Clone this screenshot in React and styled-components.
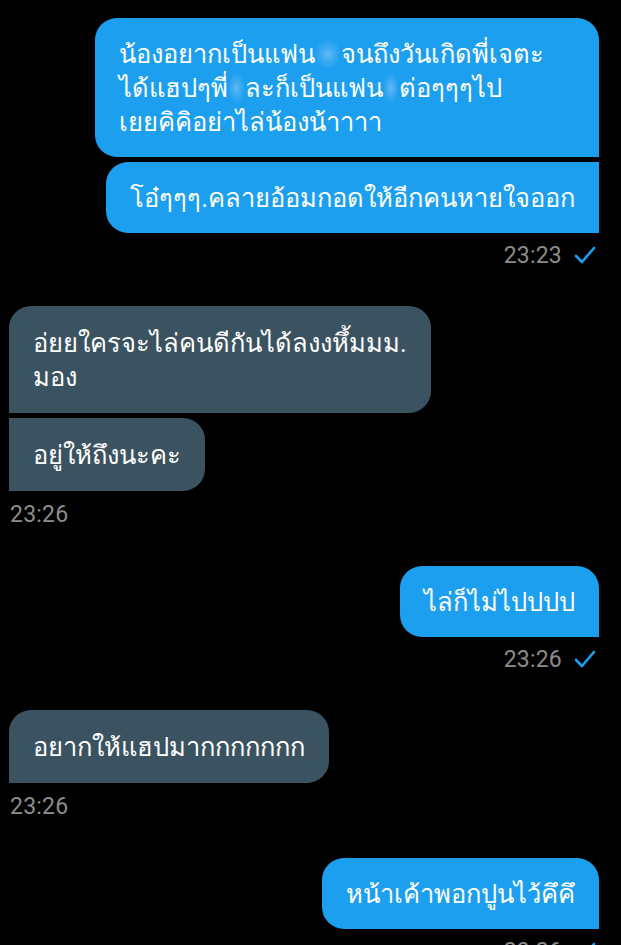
import React from 'react'
import styled, { createGlobalStyle } from 'styled-components'

const GlobalStyle = createGlobalStyle`
  html, body {
    margin: 0;
    padding: 0;
    background: #000;
  }
  body {
    font-family: "Roboto", "Noto Sans", "DejaVu Sans", sans-serif;
    -webkit-font-smoothing: antialiased;
  }
`

const Screen = styled.div`
  width: 621px;
  min-height: 945px;
  background: #000;
  padding: 18px 22px 0 9px;
  box-sizing: border-box;
  display: flex;
  flex-direction: column;
`

const Group = styled.div`
  display: flex;
  flex-direction: column;
  align-items: ${props => (props.$out ? 'flex-end' : 'flex-start')};
  gap: 5px;
  margin-bottom: ${props => (props.$out ? '37px' : '38px')};
`

const Bubble = styled.div`
  box-sizing: border-box;
  width: ${props => props.$width || 'auto'};
  padding: ${props => (props.$out ? '18.5px 24px' : '19.5px 24px')};
  font-size: 25.5px;
  line-height: 34px;
  color: #fff;
  white-space: nowrap;
  background: ${props => (props.$out ? '#1d9ff0' : '#3b5361')};
  border-radius: ${props => {
    const top = props.$first ? '22px' : '0'
    return props.$out ? `22px ${top} 0 22px` : `${top} 22px 22px 0`
  }};
`

const Line = styled.span`
  display: block;
`

/* privacy smudge over a name */
const Blur = styled.span`
  display: inline-block;
  width: ${props => props.$w || '24px'};
  height: 30px;
  vertical-align: -6px;
  background: radial-gradient(ellipse at center, rgba(150, 205, 245, 0.55) 0%, rgba(29, 159, 240, 0) 70%);
`

const Meta = styled.div`
  display: flex;
  align-items: center;
  gap: 12px;
  margin-top: ${props => (props.$out ? '3px' : '4px')};
  padding-right: ${props => (props.$out ? '3px' : '0')};
  padding-left: ${props => (props.$out ? '0' : '1px')};
  height: 28px;
`

const Time = styled.span`
  font-family: "Roboto", "Noto Sans", sans-serif;
  font-size: 23px;
  color: #8c8c8c;
  letter-spacing: 0.2px;
`

const Tick = () => (
  <svg width="22" height="20" viewBox="0 0 22 20">
    <polyline
      points="2,11 8,17 20,3"
      fill="none"
      stroke="#1d9ff0"
      strokeWidth="2.6"
      strokeLinecap="round"
      strokeLinejoin="round"
    />
  </svg>
)

const messages = [
  {
    out: true,
    time: '23:23',
    bubbles: [
      {
        width: '504px',
        lines: [
          <>น้องอยากเป็นแฟน<Blur $w="26px" />จนถึงวันเกิดพี่เจตะ</>,
          <>ได้แฮปๆพี่<Blur $w="17px" />ละก็เป็นแฟน<Blur $w="16px" />ต่อๆๆๆไป</>,
          'เยยคิคิอย่าไล่น้องน้าาาา',
        ],
      },
      { lines: ['โอ๋ๆๆๆ.คลายอ้อมกอดให้อีกคนหายใจออก'] },
    ],
  },
  {
    out: false,
    time: '23:26',
    bubbles: [
      { lines: ['อ่ยยใครจะไล่คนดีกันได้ลงงหึ้มมม.', 'มอง'] },
      { lines: ['อยู่ให้ถึงนะคะ'] },
    ],
  },
  { out: true, time: '23:26', bubbles: [{ lines: ['ไล่ก็ไม่ไปปปป'] }] },
  { out: false, time: '23:26', bubbles: [{ lines: ['อยากให้แฮปมากกกกกกก'] }] },
  { out: true, time: '23:26', bubbles: [{ lines: ['หน้าเค้าพอกปูนไว้คึคึ'] }] },
]

export default function App() {
  return (
    <>
      <GlobalStyle />
      <Screen>
        {messages.map((m, i) => (
          <Group key={i} $out={m.out}>
            {m.bubbles.map((b, j) => (
              <Bubble key={j} $out={m.out} $first={j === 0} $width={b.width}>
                {b.lines.map((l, k) => (
                  <Line key={k}>{l}</Line>
                ))}
              </Bubble>
            ))}
            <Meta $out={m.out}>
              <Time>{m.time}</Time>
              {m.out && <Tick />}
            </Meta>
          </Group>
        ))}
      </Screen>
    </>
  )
}
